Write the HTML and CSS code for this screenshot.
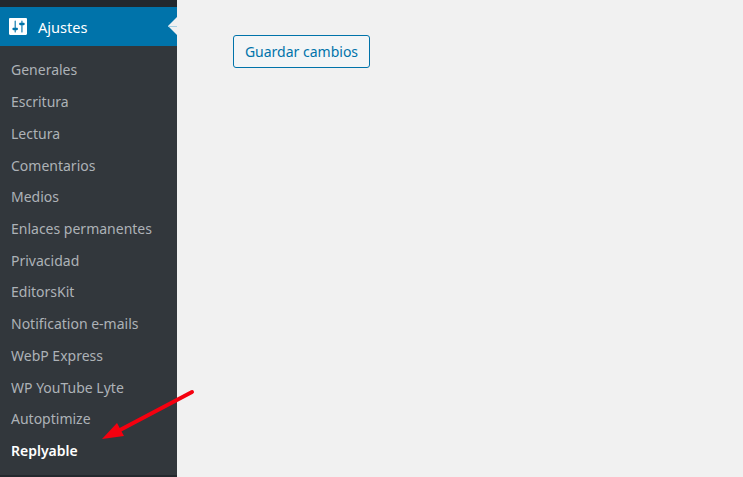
FILE: index.html
```html
<!DOCTYPE html>
<html lang="es">
<head>
<meta charset="utf-8">
<title>Ajustes</title>
<link rel="stylesheet" href="styles.css">
</head>
<body>
<div class="page">
  <nav class="sidebar">
    <div class="topstrip"></div>
    <div class="current">
      <svg class="icon" viewBox="2 3 16 14" width="18" height="17" preserveAspectRatio="none"><path fill="#fff" fill-rule="evenodd" d="M18 16V4c0-.55-.45-1-1-1H3c-.55 0-1 .45-1 1v12c0 .55.45 1 1 1h14c.55 0 1-.45 1-1zM8 11h1c.55 0 1 .45 1 1s-.45 1-1 1H8v1.500c0 .28-.22.5-.5.5s-.5-.22-.5-.5V13H6c-.55 0-1-.45-1-1s.45-1 1-1h1V5.500c0-.28.22-.5.5-.5s.5.22.5.5V11zm5-2h-1c-.55 0-1-.45-1-1s.45-1 1-1h1V5.500c0-.28.22-.5.5-.5s.5.22.5.5V7h1c.55 0 1 .45 1 1s-.45 1-1 1h-1v5.500c0 .28-.22.5-.5.5s-.5-.22-.5-.5V9z"/></svg>
      <span class="current-label">Ajustes</span>
      <span class="notch"></span>
    </div>
    <ul class="submenu">
      <li>Generales</li>
      <li>Escritura</li>
      <li>Lectura</li>
      <li>Comentarios</li>
      <li>Medios</li>
      <li>Enlaces permanentes</li>
      <li>Privacidad</li>
      <li>EditorsKit</li>
      <li>Notification e-mails</li>
      <li>WebP Express</li>
      <li>WP YouTube Lyte</li>
      <li>Autoptimize</li>
      <li class="active">Replyable</li>
    </ul>
    <div class="bottomstrip"></div>
  </nav>
  <main class="content">
    <button class="save" type="button">Guardar cambios</button>
  </main>
  <svg class="arrow" viewBox="0 0 743 477" width="743" height="477"><path d="M192 392L120 430" stroke="#f5000f" stroke-width="4" stroke-linecap="round" fill="none"/><path d="M102 439L117 423L124 436Z" fill="#f5000f"/></svg>
</div>
</body>
</html>
```
FILE: styles.css
```css
* { box-sizing: border-box; }
html, body { margin: 0; padding: 0; }
body { font-family: "Noto Sans", "Open Sans", sans-serif; background: #f1f1f1; }
.page { position: relative; display: flex; width: 743px; height: 477px; overflow: hidden; }
.sidebar { display: flex; flex-direction: column; width: 177px; height: 477px; background: #32373c; flex: none; }
.topstrip { height: 7px; background: #23282d; }
.current { position: relative; display: flex; align-items: center; height: 39px; background: #0073aa; padding-left: 9px; color: #fff; }
.icon { flex: none; }
.current-label { margin-left: 11px; font-size: 14.6px; }
.notch { position: absolute; right: 0; top: 10px; width: 0; height: 0; border: 9px solid transparent; border-right-color: #f1f1f1; border-left-width: 0; }
.notch::after { content: ""; position: absolute; left: 0; top: 0; width: 9px; height: 1px; background: #a8d0e4; }
.submenu { flex: 1; list-style: none; margin: 8.3px 0 0; padding: 0; }
.submenu li { height: 31.74px; padding-left: 11px; line-height: 32px; font-size: 14px; color: #adb2b7; white-space: nowrap; }
.submenu .active { color: #fff; font-weight: 600; }
.bottomstrip { height: 2px; background: #23282d; }
.content { flex: 1; padding: 35px 0 0 56px; }
.save { display: block; width: 137px; height: 33px; padding: 0; border: 1px solid #0073aa; border-radius: 3px; background: #f3f5f6; color: #0073aa; font: 14px "Noto Sans", "Open Sans", sans-serif; }
.arrow { position: absolute; left: 0; top: 0; pointer-events: none; }
```
